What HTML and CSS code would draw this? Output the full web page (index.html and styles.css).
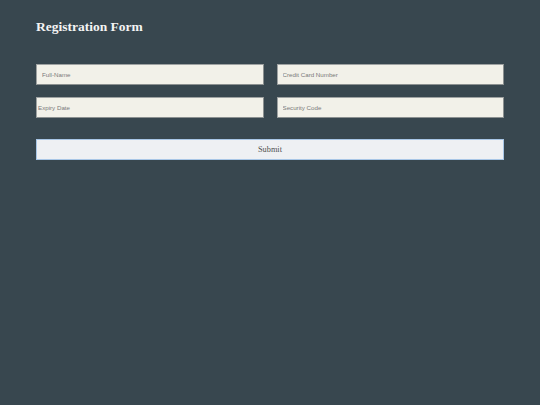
FILE: index.html
```html
<!DOCTYPE html>
<html>
<head>
<meta charset="utf-8">
<link rel="stylesheet" href="styles.css">
</head>
<body>
<main class="page">
  <h1 class="title">Registration Form</h1>
  <form class="form">
    <div class="grid">
      <input class="field" type="text" placeholder="Full-Name">
      <input class="field" type="text" placeholder="Credit Card Number">
      <input class="field field-tight" type="text" placeholder="Expiry Date">
      <input class="field" type="text" placeholder="Security Code">
    </div>
    <button class="submit" type="button">Submit</button>
  </form>
</main>
</body>
</html>
```
FILE: styles.css
```css
html, body {
  margin: 0;
  padding: 0;
  background: #38474f;
  height: 100%;
}
.page {
  padding: 19px 36px 0 36px;
}
.title {
  margin: 0;
  font-family: "Liberation Serif", serif;
  font-weight: bold;
  font-size: 13.5px;
  line-height: 16px;
  color: #f4f4f4;
}
.form {
  margin-top: 29px;
  display: flex;
  flex-direction: column;
  gap: 21px;
}
.grid {
  display: grid;
  grid-template-columns: 1fr 1fr;
  column-gap: 13px;
  row-gap: 12px;
}
.field {
  box-sizing: border-box;
  height: 21px;
  margin: 0;
  padding: 0 5px;
  border: 1px solid #8b9090;
  border-top-color: #9ea2a2;
  border-left-color: #9ea2a2;
  background: #f2f1e9;
  font-family: "Liberation Sans", sans-serif;
  font-size: 6.2px;
  color: #333;
  outline: none;
}
.field::placeholder {
  color: #7a7a7a;
}
.field-tight {
  padding-left: 1px;
}
.submit {
  box-sizing: border-box;
  height: 21px;
  width: 100%;
  margin: 0;
  padding: 0;
  border: 1px solid #a8c6e6;
  background: #eef0f3;
  font-family: "Liberation Serif", serif;
  font-size: 8.3px;
  color: #505050;
}
```
